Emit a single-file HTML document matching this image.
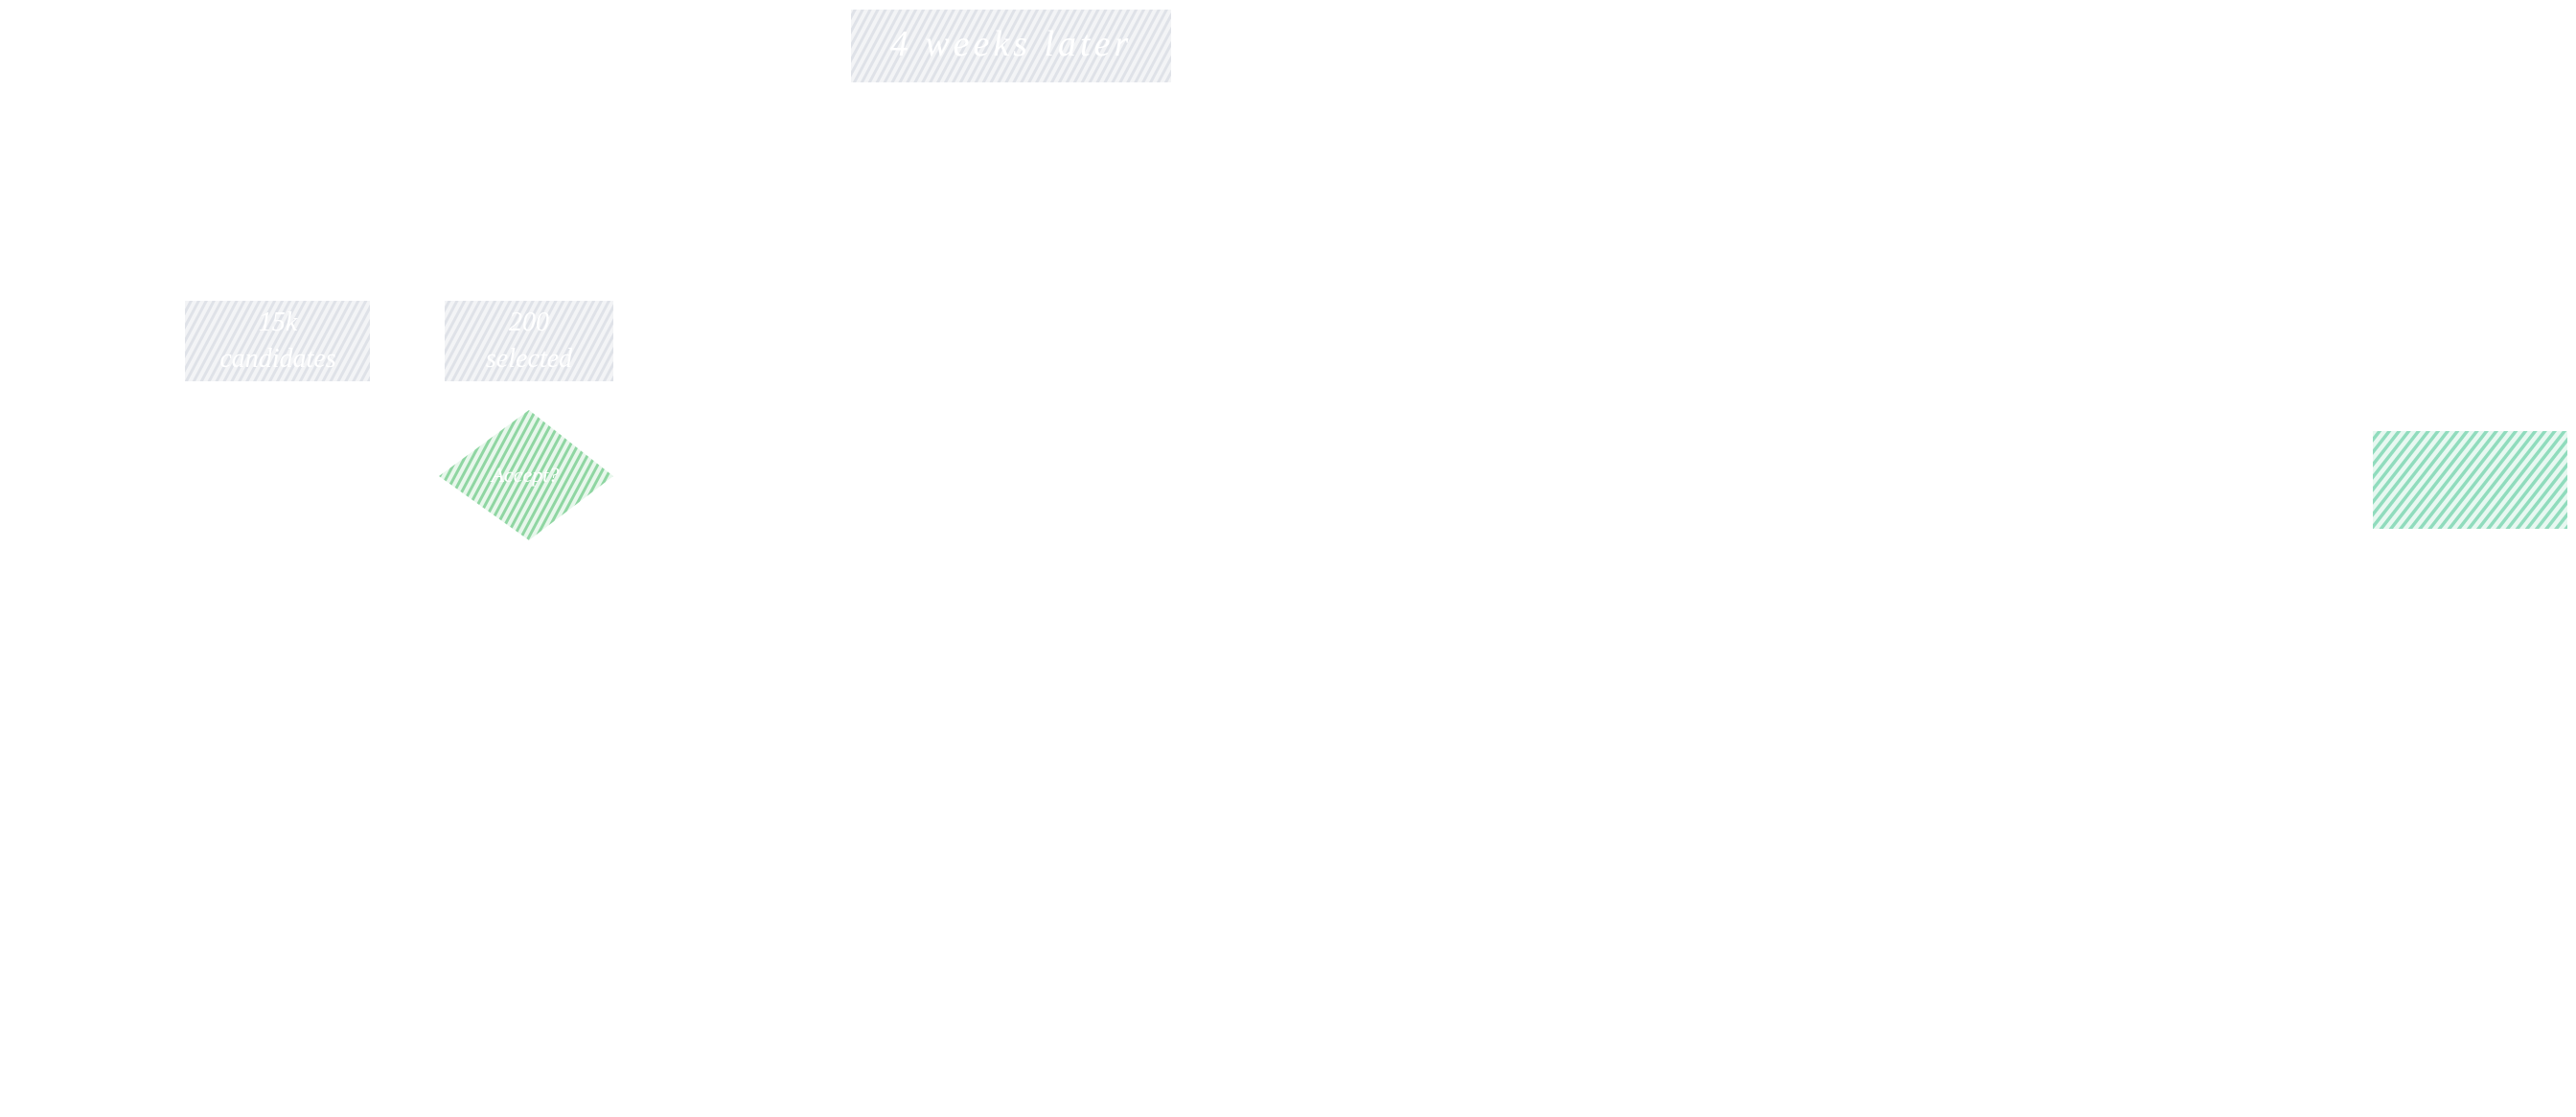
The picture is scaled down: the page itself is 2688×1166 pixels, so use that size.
<!DOCTYPE html>
<html><head><meta charset="utf-8"><style>
html,body{margin:0;padding:0;background:#fff;width:2688px;height:1166px;overflow:hidden}
svg{display:block}
text{font-family:"Liberation Serif",serif;font-style:italic;fill:#fff}
</style></head><body>
<svg width="2688" height="1166" viewBox="0 0 2688 1166" xmlns="http://www.w3.org/2000/svg">
<defs>
<pattern id="g" width="7" height="7" patternUnits="userSpaceOnUse" patternTransform="rotate(28)">
<rect width="7" height="7" fill="#f3f4f6"/><rect width="3" height="7" fill="#dfe2e8"/></pattern>
<pattern id="gr" width="7" height="7" patternUnits="userSpaceOnUse" patternTransform="rotate(28)">
<rect width="7" height="7" fill="#e8f7ec"/><rect width="3" height="7" fill="#8fd6a2"/></pattern>
<pattern id="t" width="8" height="8" patternUnits="userSpaceOnUse" patternTransform="rotate(38)">
<rect width="8" height="8" fill="#e8f8f1"/><rect width="3.5" height="8" fill="#90dcbd"/></pattern>
</defs>
<rect x="888" y="10" width="334" height="76" fill="url(#g)"/>
<text x="1055" y="58" font-size="38" text-anchor="middle" letter-spacing="4">4 weeks later</text>
<rect x="193" y="314" width="193" height="84" fill="url(#g)"/>
<text x="290" y="345" font-size="28" text-anchor="middle">15k</text>
<text x="290" y="383" font-size="28" text-anchor="middle">candidates</text>
<rect x="464" y="314" width="176" height="84" fill="url(#g)"/>
<text x="552" y="345" font-size="28" text-anchor="middle">200</text>
<text x="552" y="383" font-size="28" text-anchor="middle">selected</text>
<polygon points="552,428 640,497 552,564 458,497" fill="url(#gr)"/>
<text x="548" y="503" font-size="22" text-anchor="middle">Accept?</text>
<rect x="2476" y="450" width="203" height="102" fill="url(#t)"/>
</svg>
</body></html>
